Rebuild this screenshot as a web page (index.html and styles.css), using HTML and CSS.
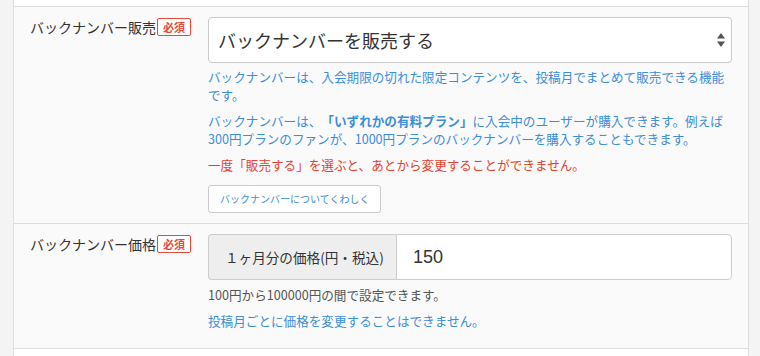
FILE: index.html
```html
<!DOCTYPE html>
<html lang="ja">
<head>
  <meta charset="UTF-8">
  <title>バックナンバー設定</title>
  <link rel="stylesheet" href="styles.css">
</head>
<body>
  <div class="panel">
    <!-- 販売設定 -->
    <div class="form-row">
      <div class="form-label">
        <span>バックナンバー販売</span><span class="required">必須</span>
      </div>
      <div class="form-body">
        <div class="select-wrap">
          <select class="form-select">
            <option>バックナンバーを販売する</option>
          </select>
          <svg class="select-arrow" width="10" height="16" viewBox="0 0 10 16">
            <path d="M5 1 L9 6.5 L1 6.5 Z" fill="#555"/>
            <path d="M5 15 L9 9.5 L1 9.5 Z" fill="#555"/>
          </svg>
        </div>
        <p class="note note-first">バックナンバーは、入会期限の切れた限定コンテンツを、投稿月でまとめて販売できる機能です。</p>
        <p class="note">バックナンバーは、<strong>「いずれかの有料プラン」</strong>に入会中のユーザーが購入できます。例えば300円プランのファンが、1000円プランのバックナンバーを購入することもできます。</p>
        <p class="note note-alert">一度「販売する」を選ぶと、あとから変更することができません。</p>
        <a class="btn-detail" href="#">バックナンバーについてくわしく</a>
      </div>
    </div>
    <!-- 価格設定 -->
    <div class="form-row">
      <div class="form-label">
        <span>バックナンバー価格</span><span class="required">必須</span>
      </div>
      <div class="form-body">
        <div class="input-group">
          <span class="input-addon">１ヶ月分の価格(円・税込)</span>
          <input class="form-input" type="text" value="150">
        </div>
        <p class="note note-gray">100円から100000円の間で設定できます。</p>
        <p class="note note-last">投稿月ごとに価格を変更することはできません。</p>
      </div>
    </div>
  </div>
</body>
</html>
```

FILE: styles.css
```css
/* バックナンバー設定フォーム */
body{
  margin: 0;
  background-color: #f4f4f4;
  font-family: "Hiragino Kaku Gothic ProN", "Noto Sans CJK JP", sans-serif;
  color: #333;
  text-spacing-trim: space-all;
}
.panel{
  margin-left: 13px;
  width: 736px;
  height: 356px;
  padding-top: 6px;
  box-sizing: border-box;
  background-color: #fff;
  border-left: 1px solid #ddd;
  border-right: 1px solid #ddd;
}
.form-row{
  display: flex;
  padding: 10px 16px 10px 16px;
  background-color: #fafafa;
  border-top: 1px solid #ddd;
}
.form-row:last-child{
  border-bottom: 1px solid #ddd;
}
.form-label{
  width: 178px;
  flex: none;
  display: flex;
  align-items: flex-start;
  font-size: 14px;
  line-height: 20px;
  color: #333;
}
.required{
  margin: 1px 0 0 1px;
  width: 34px;
  height: 18px;
  box-sizing: border-box;
  border: 1px solid #e54b3c;
  border-radius: 2px;
  background-color: #fff;
  color: #e54b3c;
  font-size: 11px;
  font-weight: bold;
  line-height: 16px;
  text-align: center;
}
.form-body{
  flex: 1;
}
.select-wrap{
  position: relative;
}
.form-select{
  display: block;
  width: 100%;
  height: 46px;
  margin: 0;
  padding: 0 30px 0 9px;
  box-sizing: border-box;
  appearance: none;
  border: 1px solid #ccc;
  border-radius: 4px;
  background-color: #fff;
  font-family: inherit;
  font-size: 18px;
  color: #333;
}
.select-arrow{
  position: absolute;
  right: 6px;
  top: 15px;
}
.note{
  margin: 8px 0 0 0;
  font-size: 12.6px;
  line-height: 18px;
  color: #3b8ed8;
}
.note strong{
  font-weight: bold;
}
.note-first{
  margin-top: 5px;
}
.note-alert{
  color: #e4412f;
}
.note-gray{
  margin-top: 6px;
  color: #555;
}
.note-last{
  margin-bottom: 8px;
}
.btn-detail{
  display: inline-block;
  margin-top: 11px;
  padding: 0 11px;
  height: 28px;
  box-sizing: border-box;
  border: 1px solid #ccc;
  border-radius: 3px;
  background-color: #fff;
  color: #3b8ed8;
  font-size: 10px;
  line-height: 26px;
  white-space: nowrap;
  text-decoration: none;
}
.input-group{
  display: flex;
  height: 46px;
}
.input-addon{
  width: 188px;
  flex: none;
  box-sizing: border-box;
  padding-left: 16px;
  border: 1px solid #ccc;
  border-right: none;
  border-radius: 4px 0 0 4px;
  background-color: #eee;
  font-size: 13.6px;
  line-height: 44px;
  color: #333;
}
.form-input{
  flex: 1;
  min-width: 0;
  margin: 0;
  padding: 0 16px;
  box-sizing: border-box;
  border: 1px solid #ccc;
  border-radius: 0 4px 4px 0;
  background-color: #fff;
  font-family: "Helvetica Neue", "Liberation Sans", sans-serif;
  font-size: 18px;
  color: #333;
}
```
